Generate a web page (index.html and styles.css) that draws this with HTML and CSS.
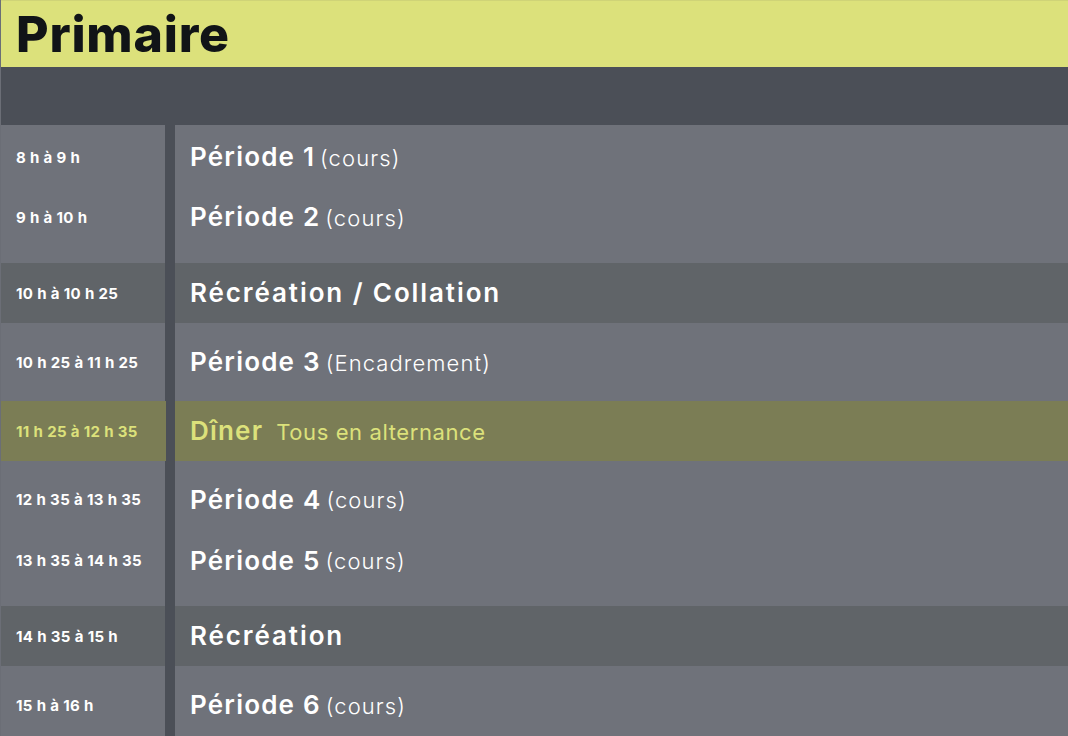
FILE: index.html
```html
<!DOCTYPE html>
<html lang="fr">
<head>
<meta charset="utf-8">
<title>Primaire</title>
<link rel="stylesheet" href="styles.css">
</head>
<body>
<div class="page">
  <header class="header"><h1>Primaire</h1></header>
  <div class="band"></div>
  <div class="schedule">
    <div class="block block-course block-double1">
      <div class="times">
        <div class="line">8 h à 9 h</div>
        <div class="line">9 h à 10 h</div>
      </div>
      <div class="titles">
        <div class="line"><strong>Période 1</strong><span class="note">(cours)</span></div>
        <div class="line"><strong>Période 2</strong><span class="note">(cours)</span></div>
      </div>
    </div>
    <div class="block block-break">
      <div class="times"><div class="line">10 h à 10 h 25</div></div>
      <div class="titles"><div class="line"><strong class="wide">Récréation / Collation</strong></div></div>
    </div>
    <div class="block block-course block-single">
      <div class="times"><div class="line">10 h 25 à 11 h 25</div></div>
      <div class="titles"><div class="line"><strong>Période 3</strong><span class="note">(Encadrement)</span></div></div>
    </div>
    <div class="block block-lunch">
      <div class="times"><div class="line">11 h 25 à 12 h 35</div></div>
      <div class="titles"><div class="line"><strong>Dîner</strong><span class="note lunch-note">Tous en alternance</span></div></div>
    </div>
    <div class="block block-course block-double2">
      <div class="times">
        <div class="line">12 h 35 à 13 h 35</div>
        <div class="line">13 h 35 à 14 h 35</div>
      </div>
      <div class="titles">
        <div class="line"><strong>Période 4</strong><span class="note">(cours)</span></div>
        <div class="line"><strong>Période 5</strong><span class="note">(cours)</span></div>
      </div>
    </div>
    <div class="block block-break">
      <div class="times"><div class="line">14 h 35 à 15 h</div></div>
      <div class="titles"><div class="line"><strong class="wide">Récréation</strong></div></div>
    </div>
    <div class="block block-course block-single">
      <div class="times"><div class="line">15 h à 16 h</div></div>
      <div class="titles"><div class="line"><strong>Période 6</strong><span class="note">(cours)</span></div></div>
    </div>
  </div>
</div>
</body>
</html>
```
FILE: styles.css
```css
* { box-sizing: border-box; }
html, body { margin: 0; padding: 0; }
body {
  background: #4b4f57;
  font-family: Inter, "Noto Sans", sans-serif;
  overflow: hidden;
}
.page {
  width: 1068px;
  height: 736px;
  overflow: hidden;
  background: #4b4f57;
  border-left: 1px solid #6b6e76;
}
.header {
  height: 67px;
  background: #dce17b;
  border-top: 1px solid #cfd377;
  display: flex;
  align-items: center;
  padding-left: 15px;
}
.header h1 {
  margin: 0;
  font-size: 50px;
  font-weight: 800;
  color: #111417;
  letter-spacing: 0.8px;
  line-height: 1;
  padding-bottom: 1px;
}
.band { height: 58px; }
.schedule { display: flex; flex-direction: column; }
.block {
  display: grid;
  grid-template-columns: 164px 1fr;
  column-gap: 10px;
}
.times, .titles { display: flex; flex-direction: column; }
.times { padding-left: 15px; }
.titles { padding-left: 15px; }
.line { display: flex; align-items: center; height: 60px; white-space: nowrap; }
.times .line {
  font-size: 15px;
  font-weight: 700;
  color: #ffffff;
  letter-spacing: 0.35px;
}
.titles .line {
  font-size: 26px;
  color: #ffffff;
  padding-bottom: 1px;
}
.titles strong { font-weight: 600; letter-spacing: 1.2px; }
.titles strong.wide { letter-spacing: 1.9px; }
.note {
  font-size: 22px;
  font-weight: 300;
  margin-left: 5px;
  letter-spacing: 1.1px;
  padding-top: 2px;
}
.block-course .times, .block-course .titles { background: #6f727a; }
.block-break .times, .block-break .titles { background: #606468; }
.block-lunch .times, .block-lunch .titles { background: #7b7d55; }
.block-lunch .line { color: #dce17b; }
.block-lunch .times { margin-right: -1px; }
.lunch-note { margin-left: 13px; font-weight: 400; letter-spacing: 0.6px; }

.block-double1 .times, .block-double1 .titles { padding-top: 2px; padding-bottom: 16px; }
.block-double2 .times, .block-double2 .titles { padding-top: 8px; padding-bottom: 15px; }
.block-double2 .line { height: 61px; }
.block-single .line { height: 78px; }
```
